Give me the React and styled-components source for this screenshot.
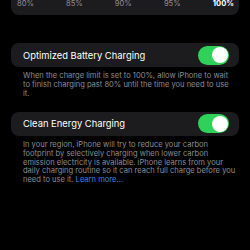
import styled, { createGlobalStyle } from 'styled-components';

const GlobalStyle = createGlobalStyle`
  html, body {
    margin: 0;
    padding: 0;
    background: #000;
  }
  body {
    font-family: "Inter", "Roboto", "Liberation Sans", sans-serif;
    -webkit-font-smoothing: antialiased;
  }
`;

const Page = styled.div`
  width: 250px;
  height: 250px;
  overflow: hidden;
  background: #000;
  padding: 0 11px 0 11px;
  box-sizing: border-box;
  display: flex;
  flex-direction: column;
`;

const LimitCard = styled.div`
  background: #1c1c1e;
  border-radius: 0 0 8px 8px;
  height: 15px;
  padding: 0 5px 0 6px;
  display: flex;
  justify-content: space-between;
  align-items: flex-start;
`;

const Percent = styled.span`
  font-size: 7.6px;
  line-height: 8px;
  color: ${({ $active }) => ($active ? '#fff' : '#8e8e93')};
  font-weight: ${({ $active }) => ($active ? 700 : 400)};
`;

const Section = styled.div`
  margin-top: ${({ $top }) => $top}px;
  display: flex;
  flex-direction: column;
`;

const Row = styled.div`
  background: #1c1c1e;
  border-radius: 8px;
  height: 24px;
  padding: 0 10px 0 12px;
  display: flex;
  align-items: center;
  justify-content: space-between;
`;

const Title = styled.span`
  color: #fff;
  font-size: 9.4px;
`;

const Toggle = styled.div`
  width: 31px;
  height: 19px;
  border-radius: 10px;
  background: #30d158;
  display: flex;
  align-items: center;
  justify-content: flex-end;
  padding: 0 1.5px;
  box-sizing: border-box;
`;

const Knob = styled.div`
  width: 16px;
  height: 16px;
  border-radius: 50%;
  background: #fff;
`;

const Note = styled.div`
  padding: 5px 4px 0 12px;
  color: #8d8d93;
  font-size: 7.55px;
  line-height: 8.9px;
`;

const Line = styled.span`
  display: block;
  white-space: nowrap;
`;

const Link = styled.span`
  color: #2f86ec;
`;

const percents = ['80%', '85%', '90%', '95%', '100%'];

export default function App() {
  return (
    <>
      <GlobalStyle />
      <Page>
        <LimitCard>
          {percents.map(p => (
            <Percent key={p} $active={p === '100%'}>{p}</Percent>
          ))}
        </LimitCard>

        <Section $top={28}>
          <Row>
            <Title>Optimized Battery Charging</Title>
            <Toggle><Knob /></Toggle>
          </Row>
          <Note>
            <Line>When the charge limit is set to 100%, allow iPhone to wait</Line>
            <Line>to finish charging past 80% until the time you need to use</Line>
            <Line>it.</Line>
          </Note>
        </Section>

        <Section $top={13}>
          <Row>
            <Title>Clean Energy Charging</Title>
            <Toggle><Knob /></Toggle>
          </Row>
          <Note>
            <Line>In your region, iPhone will try to reduce your carbon</Line>
            <Line>footprint by selectively charging when lower carbon</Line>
            <Line>emission electricity is available. iPhone learns from your</Line>
            <Line>daily charging routine so it can reach full charge before you</Line>
            <Line>need to use it. <Link>Learn more...</Link></Line>
          </Note>
        </Section>
      </Page>
    </>
  );
}
